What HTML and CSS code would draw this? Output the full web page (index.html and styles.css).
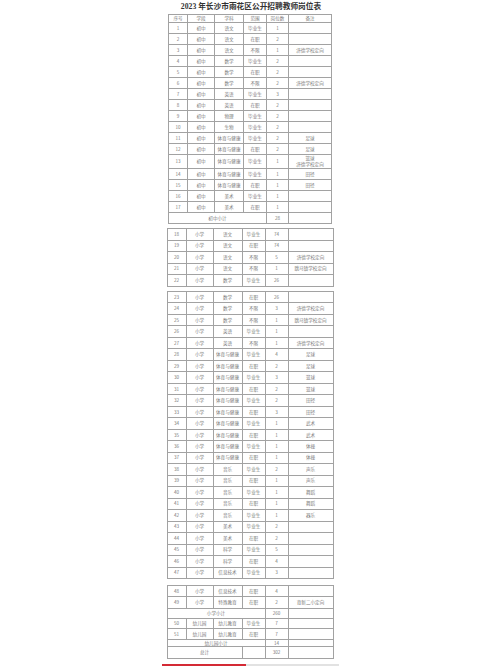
FILE: index.html
```html
<!DOCTYPE html>
<html lang="zh-CN">
<head>
<meta charset="utf-8">
<title>2023年长沙市雨花区公开招聘教师岗位表</title>
<link rel="stylesheet" href="styles.css">
</head>
<body>
<div class="page">
  <h1 class="title">2023 年长沙市雨花区公开招聘教师岗位表</h1>

  <div class="block b1">
    <div class="c">序号</div><div class="c">学段</div><div class="c">学科</div><div class="c">范围</div><div class="c">岗位数</div><div class="c">备注</div>
    <div class="c">1</div><div class="c">初中</div><div class="c">语文</div><div class="c">毕业生</div><div class="c">1</div><div class="c"></div>
    <div class="c">2</div><div class="c">初中</div><div class="c">语文</div><div class="c">在职</div><div class="c">2</div><div class="c"></div>
    <div class="c">3</div><div class="c">初中</div><div class="c">语文</div><div class="c">不限</div><div class="c">1</div><div class="c">济德学校定向</div>
    <div class="c">4</div><div class="c">初中</div><div class="c">数学</div><div class="c">毕业生</div><div class="c">2</div><div class="c"></div>
    <div class="c">5</div><div class="c">初中</div><div class="c">数学</div><div class="c">在职</div><div class="c">2</div><div class="c"></div>
    <div class="c">6</div><div class="c">初中</div><div class="c">数学</div><div class="c">不限</div><div class="c">2</div><div class="c">济德学校定向</div>
    <div class="c">7</div><div class="c">初中</div><div class="c">英语</div><div class="c">毕业生</div><div class="c">3</div><div class="c"></div>
    <div class="c">8</div><div class="c">初中</div><div class="c">英语</div><div class="c">在职</div><div class="c">2</div><div class="c"></div>
    <div class="c">9</div><div class="c">初中</div><div class="c">物理</div><div class="c">毕业生</div><div class="c">2</div><div class="c"></div>
    <div class="c">10</div><div class="c">初中</div><div class="c">生物</div><div class="c">毕业生</div><div class="c">2</div><div class="c"></div>
    <div class="c">11</div><div class="c">初中</div><div class="c">体育与健康</div><div class="c">毕业生</div><div class="c">2</div><div class="c">足球</div>
    <div class="c">12</div><div class="c">初中</div><div class="c">体育与健康</div><div class="c">在职</div><div class="c">2</div><div class="c">足球</div>
    <div class="c">13</div><div class="c">初中</div><div class="c">体育与健康</div><div class="c">毕业生</div><div class="c">1</div><div class="c two">篮球<br>济德学校定向</div>
    <div class="c">14</div><div class="c">初中</div><div class="c">体育与健康</div><div class="c">毕业生</div><div class="c">1</div><div class="c">田径</div>
    <div class="c">15</div><div class="c">初中</div><div class="c">体育与健康</div><div class="c">在职</div><div class="c">1</div><div class="c">田径</div>
    <div class="c">16</div><div class="c">初中</div><div class="c">美术</div><div class="c">毕业生</div><div class="c">1</div><div class="c"></div>
    <div class="c">17</div><div class="c">初中</div><div class="c">美术</div><div class="c">在职</div><div class="c">1</div><div class="c"></div>
    <div class="c span4">初中小计</div><div class="c">28</div><div class="c"></div>
  </div>

  <div class="block b2">
    <div class="c">18</div><div class="c">小学</div><div class="c">语文</div><div class="c">毕业生</div><div class="c">74</div><div class="c"></div>
    <div class="c">19</div><div class="c">小学</div><div class="c">语文</div><div class="c">在职</div><div class="c">74</div><div class="c"></div>
    <div class="c">20</div><div class="c">小学</div><div class="c">语文</div><div class="c">不限</div><div class="c">5</div><div class="c">济德学校定向</div>
    <div class="c">21</div><div class="c">小学</div><div class="c">语文</div><div class="c">不限</div><div class="c">1</div><div class="c">跳马镇学校定向</div>
    <div class="c">22</div><div class="c">小学</div><div class="c">数学</div><div class="c">毕业生</div><div class="c">26</div><div class="c"></div>
  </div>

  <div class="block b3">
    <div class="c">23</div><div class="c">小学</div><div class="c">数学</div><div class="c">在职</div><div class="c">26</div><div class="c"></div>
    <div class="c">24</div><div class="c">小学</div><div class="c">数学</div><div class="c">不限</div><div class="c">3</div><div class="c">济德学校定向</div>
    <div class="c">25</div><div class="c">小学</div><div class="c">数学</div><div class="c">不限</div><div class="c">1</div><div class="c">跳马镇学校定向</div>
    <div class="c">26</div><div class="c">小学</div><div class="c">英语</div><div class="c">毕业生</div><div class="c">1</div><div class="c"></div>
    <div class="c">27</div><div class="c">小学</div><div class="c">英语</div><div class="c">不限</div><div class="c">1</div><div class="c">济德学校定向</div>
    <div class="c">28</div><div class="c">小学</div><div class="c">体育与健康</div><div class="c">毕业生</div><div class="c">4</div><div class="c">足球</div>
    <div class="c">29</div><div class="c">小学</div><div class="c">体育与健康</div><div class="c">在职</div><div class="c">2</div><div class="c">足球</div>
    <div class="c">30</div><div class="c">小学</div><div class="c">体育与健康</div><div class="c">毕业生</div><div class="c">3</div><div class="c">篮球</div>
    <div class="c">31</div><div class="c">小学</div><div class="c">体育与健康</div><div class="c">在职</div><div class="c">2</div><div class="c">篮球</div>
    <div class="c">32</div><div class="c">小学</div><div class="c">体育与健康</div><div class="c">毕业生</div><div class="c">2</div><div class="c">田径</div>
    <div class="c">33</div><div class="c">小学</div><div class="c">体育与健康</div><div class="c">在职</div><div class="c">3</div><div class="c">田径</div>
    <div class="c">34</div><div class="c">小学</div><div class="c">体育与健康</div><div class="c">毕业生</div><div class="c">1</div><div class="c">武术</div>
    <div class="c">35</div><div class="c">小学</div><div class="c">体育与健康</div><div class="c">在职</div><div class="c">1</div><div class="c">武术</div>
    <div class="c">36</div><div class="c">小学</div><div class="c">体育与健康</div><div class="c">毕业生</div><div class="c">1</div><div class="c">体操</div>
    <div class="c">37</div><div class="c">小学</div><div class="c">体育与健康</div><div class="c">在职</div><div class="c">1</div><div class="c">体操</div>
    <div class="c">38</div><div class="c">小学</div><div class="c">音乐</div><div class="c">毕业生</div><div class="c">2</div><div class="c">声乐</div>
    <div class="c">39</div><div class="c">小学</div><div class="c">音乐</div><div class="c">在职</div><div class="c">1</div><div class="c">声乐</div>
    <div class="c">40</div><div class="c">小学</div><div class="c">音乐</div><div class="c">毕业生</div><div class="c">1</div><div class="c">舞蹈</div>
    <div class="c">41</div><div class="c">小学</div><div class="c">音乐</div><div class="c">在职</div><div class="c">1</div><div class="c">舞蹈</div>
    <div class="c">42</div><div class="c">小学</div><div class="c">音乐</div><div class="c">毕业生</div><div class="c">1</div><div class="c">器乐</div>
    <div class="c">43</div><div class="c">小学</div><div class="c">美术</div><div class="c">毕业生</div><div class="c">2</div><div class="c"></div>
    <div class="c">44</div><div class="c">小学</div><div class="c">美术</div><div class="c">在职</div><div class="c">2</div><div class="c"></div>
    <div class="c">45</div><div class="c">小学</div><div class="c">科学</div><div class="c">毕业生</div><div class="c">5</div><div class="c"></div>
    <div class="c">46</div><div class="c">小学</div><div class="c">科学</div><div class="c">在职</div><div class="c">4</div><div class="c"></div>
    <div class="c">47</div><div class="c">小学</div><div class="c">信息技术</div><div class="c">毕业生</div><div class="c">3</div><div class="c"></div>
  </div>

  <div class="block b4">
    <div class="c">48</div><div class="c">小学</div><div class="c">信息技术</div><div class="c">在职</div><div class="c">4</div><div class="c"></div>
    <div class="c">49</div><div class="c">小学</div><div class="c">特殊教育</div><div class="c">在职</div><div class="c">2</div><div class="c">育新二小定向</div>
    <div class="c span4">小学小计</div><div class="c">260</div><div class="c"></div>
    <div class="c">50</div><div class="c">幼儿园</div><div class="c">幼儿教育</div><div class="c">毕业生</div><div class="c">7</div><div class="c"></div>
    <div class="c">51</div><div class="c">幼儿园</div><div class="c">幼儿教育</div><div class="c">在职</div><div class="c">7</div><div class="c"></div>
    <div class="c span4">幼儿园小计</div><div class="c">14</div><div class="c"></div>
    <div class="c span3">总计</div><div class="c"></div><div class="c">302</div><div class="c"></div>
  </div>

  <div class="progress">
    <div class="progress-done"></div>
    <div class="progress-rest"></div>
  </div>
</div>
</body>
</html>
```

FILE: styles.css
```css
html, body {
  margin: 0;
  padding: 0;
  background: #ffffff;
  overflow: hidden;
}

.page {
  width: 500px;
  height: 666px;
  display: flex;
  flex-direction: column;
  align-items: center;
}

.title {
  margin: 0 0 1px 0;
  height: 13px;
  line-height: 13px;
  font-family: "Liberation Serif", "Noto Sans CJK SC", serif;
  font-weight: 700;
  font-size: 7.7px;
  color: #333333;
  white-space: nowrap;
  padding-left: 2px;
}

.block {
  display: grid;
  grid-template-columns: 18px 26px 28px 22px 22px 44px;
  gap: 1px;
  background: #a2a2a2;
  border: 1px solid #a2a2a2;
  font-family: "Noto Sans CJK SC", "Noto Sans", sans-serif;
  font-size: 4.6px;
  color: #7a7a7a;
}

.c {
  background: #ffffff;
  display: flex;
  align-items: center;
  justify-content: center;
  text-align: center;
  white-space: nowrap;
  line-height: 5px;
  overflow: hidden;
}

.two {
  line-height: 5.6px;
}

.span4 {
  grid-column: span 4;
}

.span3 {
  grid-column: span 3;
}

.b1 {
  grid-template-columns: 18px 26px 28px 22px 21px 42px;
  grid-template-rows: 7px repeat(12, 10px) 13px repeat(5, 10px);
}

.b2 {
  margin-top: 4px;
  grid-template-rows: repeat(5, 10.54px);
}

.b3 {
  margin-top: 4.3px;
  grid-template-rows: repeat(25, 10.49px);
}

.b4 {
  margin-top: 5.7px;
  grid-template-rows: 10.7px 10.6px 9px 9px 10px 6.4px 10.6px;
}

.progress {
  margin-top: 5px;
  display: flex;
  width: 177px;
  height: 2px;
}

.progress-done {
  width: 84px;
  background: #d42a35;
}

.progress-rest {
  flex: 1;
  background: #e2e2e2;
}
```
